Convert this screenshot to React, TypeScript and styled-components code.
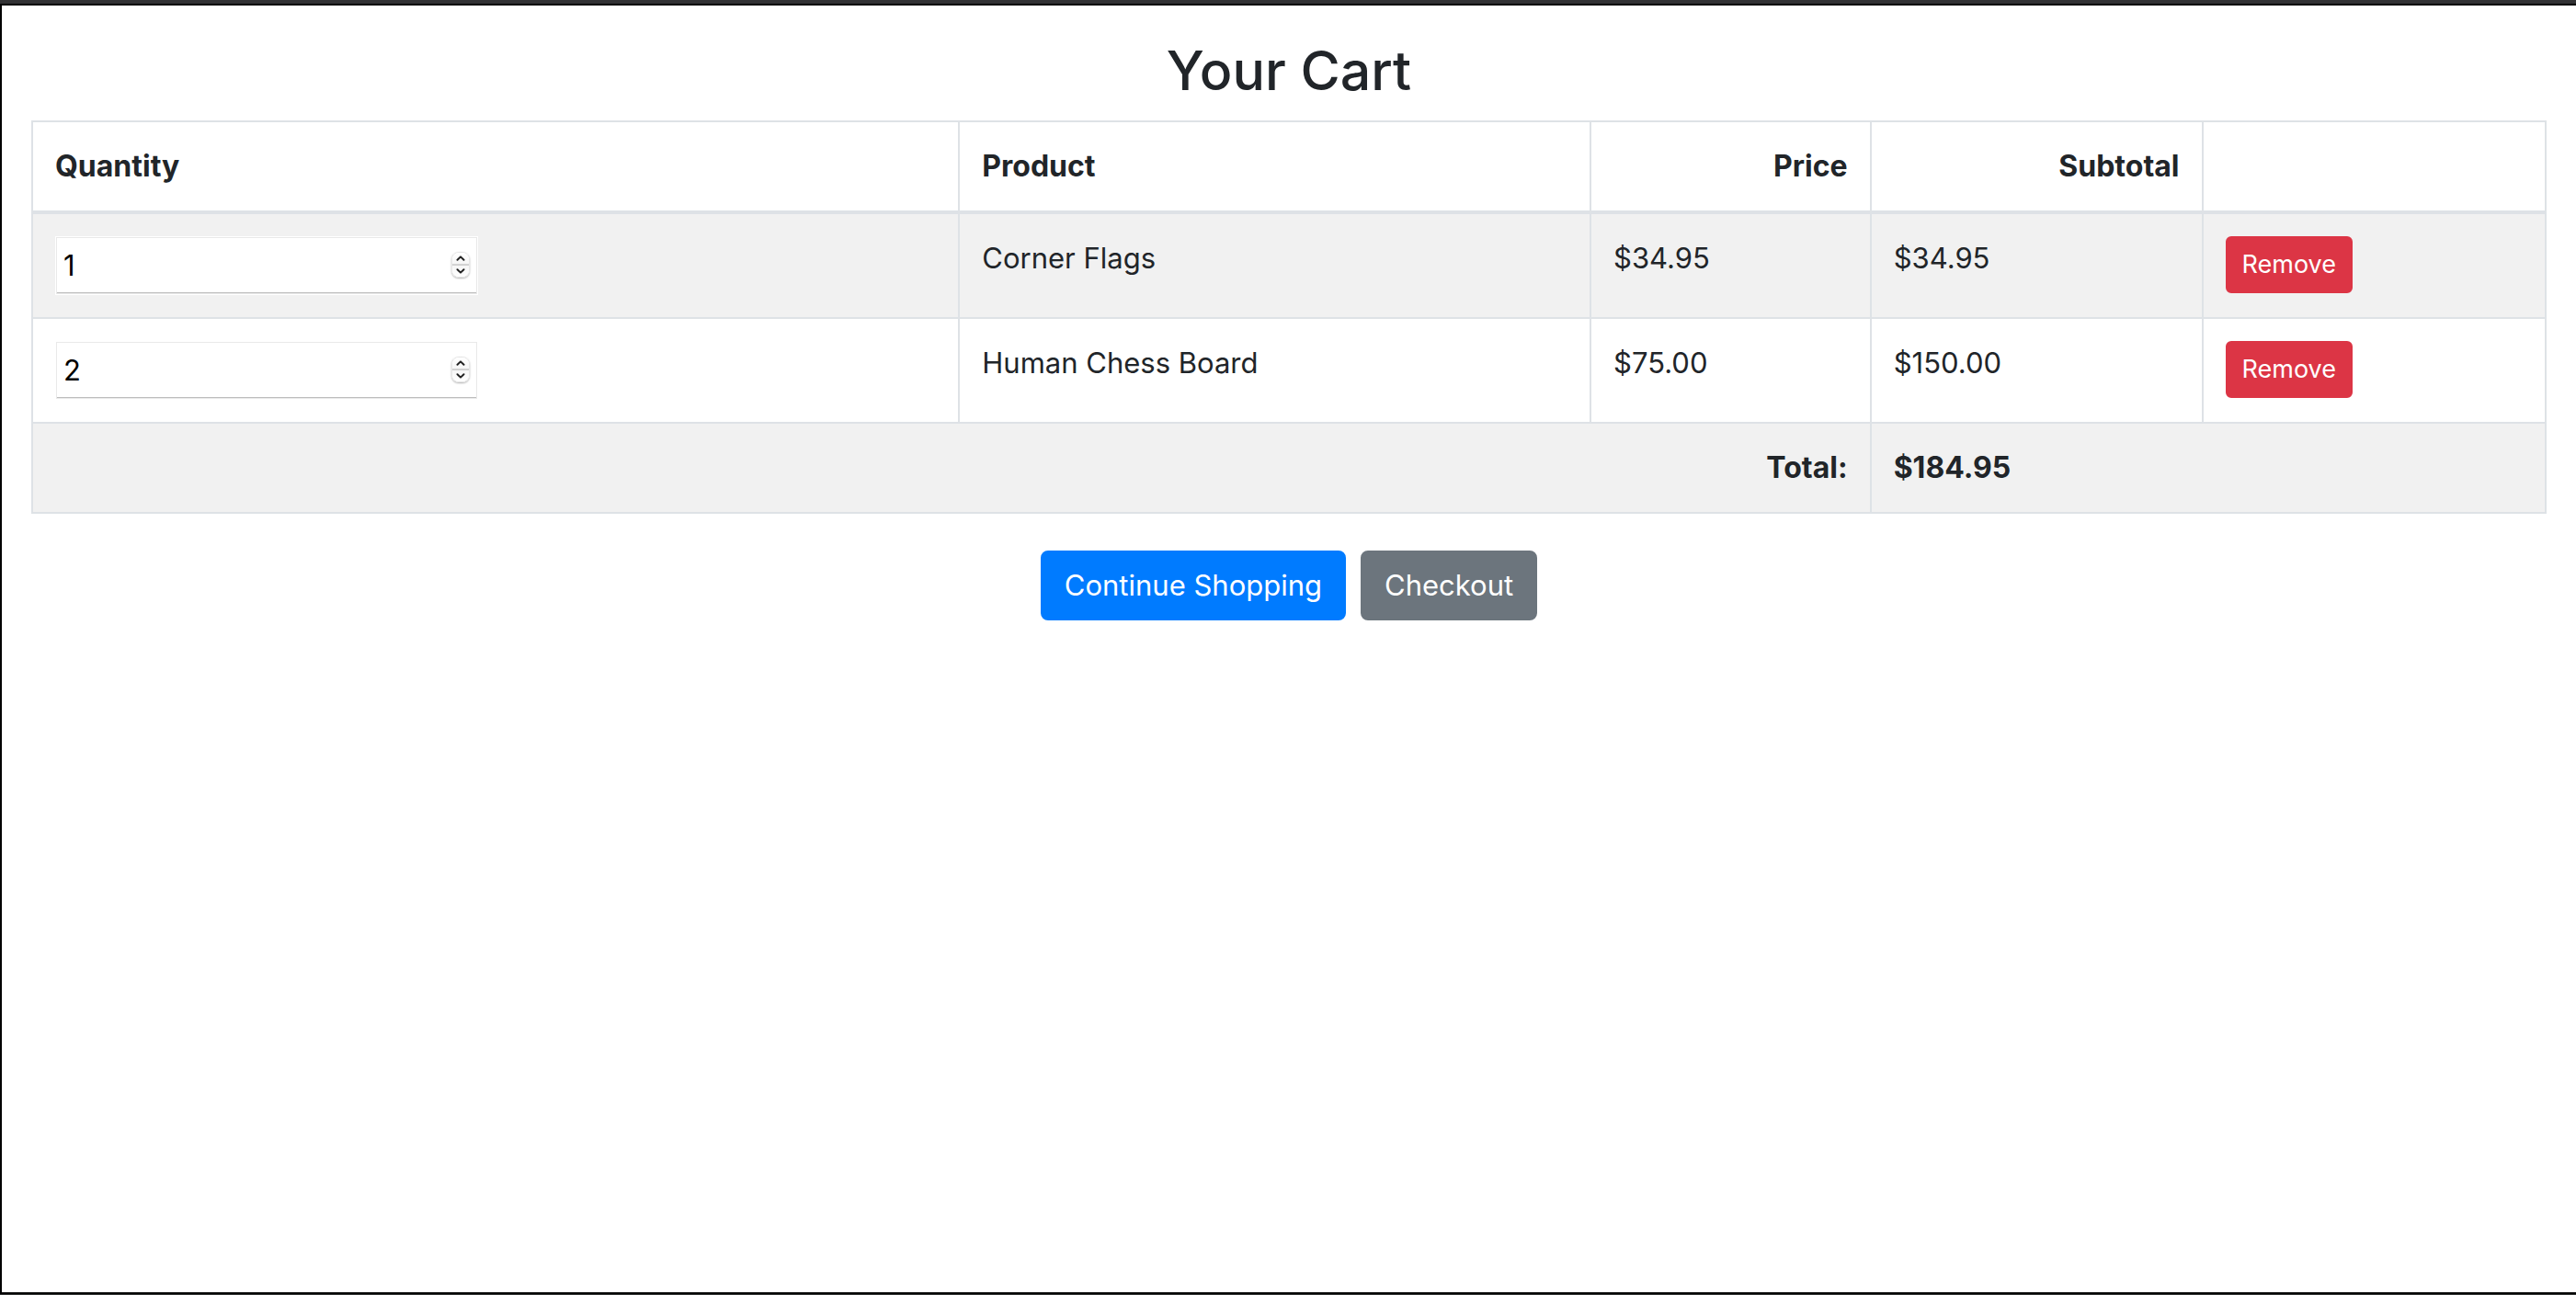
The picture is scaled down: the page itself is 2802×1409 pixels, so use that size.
import React, { useState } from "react";
import styled, { createGlobalStyle } from "styled-components";

const GlobalStyle = createGlobalStyle`
  *, *::before, *::after { box-sizing: border-box; }
  body {
    margin: 0;
    background: #fff;
    color: #212529;
    font-family: Inter, "Liberation Sans", sans-serif;
    font-size: 31px;
    line-height: 48px;
  }
`;

const WindowFrame = styled.div`
  display: flex;
  min-height: 100vh;
  border-top: 4px solid #323234;
  border-bottom: 1px solid #363837;
`;

const Page = styled.main`
  flex: 1;
  padding: 32px;
  border: 2px solid #000;
  border-right: 0;
`;

const Title = styled.h2`
  margin: 0 0 16px;
  font-size: 59px;
  font-weight: 500;
  line-height: 77px;
  text-align: center;
`;

const CartTable = styled.table`
  width: 100%;
  margin-bottom: 40px;
  table-layout: fixed;
  border-collapse: collapse;
`;

const Column = styled.col<{ $share: number }>`
  width: ${(p) => p.$share}%;
`;

const Row = styled.tr<{ $striped?: boolean }>`
  background: ${(p) => (p.$striped ? "#f1f1f1" : "#fff")};
`;

const HeadCell = styled.th<{ $end?: boolean }>`
  padding: 24px;
  border: 2px solid #dee2e6;
  border-bottom-width: 4px;
  font-size: 32px;
  font-weight: 700;
  text-align: ${(p) => (p.$end ? "right" : "left")};
`;

const Cell = styled.td<{ $end?: boolean; $strong?: boolean }>`
  padding: 24px;
  border: 2px solid #dee2e6;
  font-size: ${(p) => (p.$strong ? 32 : 31)}px;
  font-weight: ${(p) => (p.$strong ? 700 : 400)};
  text-align: ${(p) => (p.$end ? "right" : "left")};
  vertical-align: top;
`;

const QuantityBox = styled.div`
  display: flex;
  align-items: center;
  width: 460px;
  max-width: 100%;
  height: 64px;
  padding: 0 8px 2px 0;
  background: #fff;
  border: 1px solid #fff;
  box-shadow: inset 0 0 0 1px #e9e9e9, inset 0 -2px 0 #bdbdbd;
`;

const QuantityInput = styled.input`
  flex: 1;
  min-width: 0;
  height: 60px;
  padding: 0 8px;
  border: 0;
  outline: 0;
  background: transparent;
  color: #000;
  font: inherit;
  appearance: textfield;
  &::-webkit-inner-spin-button,
  &::-webkit-outer-spin-button {
    margin: 0;
    appearance: none;
  }
`;

const Spinner = styled.div`
  display: grid;
  width: 20px;
  height: 28px;
  overflow: hidden;
  border: 1px solid #e6e6e6;
  border-radius: 8px;
  box-shadow: 0 1px 2px rgba(0, 0, 0, 0.3);
`;

const StepButton = styled.button<{ $up?: boolean }>`
  display: grid;
  place-items: center;
  height: 13px;
  padding: 0;
  border: 0;
  border-top: ${(p) => (p.$up ? "0" : "1px solid #cfcfcf")};
  border-bottom: ${(p) => (p.$up ? "1px solid #d6d6d6" : "0")};
  background: linear-gradient(${(p) => (p.$up ? "#fff, #f6f6f6" : "#f6f6f6, #fff")});
`;

const Button = styled.button<{ $color: string; $small?: boolean }>`
  display: block;
  padding: ${(p) => (p.$small ? "8px 16px" : "12px 24px")};
  border: 2px solid ${(p) => p.$color};
  border-radius: ${(p) => (p.$small ? 6 : 8)}px;
  background: ${(p) => p.$color};
  color: #fff;
  font-family: inherit;
  font-size: ${(p) => (p.$small ? 27 : 31)}px;
  line-height: ${(p) => (p.$small ? 42 : 48)}px;
`;

const Actions = styled.div`
  display: flex;
  justify-content: center;
  gap: 16px;
`;

const Chevron = ({ up }: { up?: boolean }) => (
  <svg width="10" height="6" viewBox="0 0 10 6" fill="none" stroke="#222" strokeWidth="2" strokeLinecap="round" strokeLinejoin="round">
    <path d={up ? "M1.5 4.8 5 1.4 8.5 4.8" : "M1.5 1.2 5 4.6 8.5 1.2"} />
  </svg>
);

const money = (value: number) => `$${value.toFixed(2)}`;

const columnShares = [36.88, 25.12, 11.14, 13.2, 13.66];

const initialLines = [
  { name: "Corner Flags", price: 34.95, quantity: 1 },
  { name: "Human Chess Board", price: 75, quantity: 2 },
];

export default function App() {
  const [lines, setLines] = useState(initialLines);
  const total = lines.reduce((sum, l) => sum + l.price * l.quantity, 0);

  const setQuantity = (name: string, quantity: number) =>
    setLines(lines.map((l) => (l.name === name ? { ...l, quantity: Math.max(1, quantity) } : l)));

  return (
    <WindowFrame>
      <GlobalStyle />
      <Page>
        <Title>Your Cart</Title>
        <CartTable>
          <colgroup>
            {columnShares.map((share) => (
              <Column key={share} $share={share} />
            ))}
          </colgroup>
          <thead>
            <Row>
              <HeadCell>Quantity</HeadCell>
              <HeadCell>Product</HeadCell>
              <HeadCell $end>Price</HeadCell>
              <HeadCell $end>Subtotal</HeadCell>
              <HeadCell />
            </Row>
          </thead>
          <tbody>
            {lines.map((line, i) => (
              <Row key={line.name} $striped={i % 2 === 0}>
                <Cell>
                  <QuantityBox>
                    <QuantityInput
                      type="number"
                      aria-label={`Quantity of ${line.name}`}
                      value={line.quantity}
                      onChange={(e) => setQuantity(line.name, Number(e.target.value))}
                    />
                    <Spinner>
                      <StepButton $up type="button" aria-label="Increase" onClick={() => setQuantity(line.name, line.quantity + 1)}>
                        <Chevron up />
                      </StepButton>
                      <StepButton type="button" aria-label="Decrease" onClick={() => setQuantity(line.name, line.quantity - 1)}>
                        <Chevron />
                      </StepButton>
                    </Spinner>
                  </QuantityBox>
                </Cell>
                <Cell>{line.name}</Cell>
                <Cell>{money(line.price)}</Cell>
                <Cell>{money(line.price * line.quantity)}</Cell>
                <Cell>
                  <Button $small $color="#dc3545" type="button" onClick={() => setLines(lines.filter((l) => l.name !== line.name))}>
                    Remove
                  </Button>
                </Cell>
              </Row>
            ))}
            <Row $striped>
              <Cell $end $strong colSpan={3}>
                Total:
              </Cell>
              <Cell $strong colSpan={2}>
                {money(total)}
              </Cell>
            </Row>
          </tbody>
        </CartTable>
        <Actions>
          <Button $color="#007bff" type="button">
            Continue Shopping
          </Button>
          <Button $color="#6c757d" type="button">
            Checkout
          </Button>
        </Actions>
      </Page>
    </WindowFrame>
  );
}
